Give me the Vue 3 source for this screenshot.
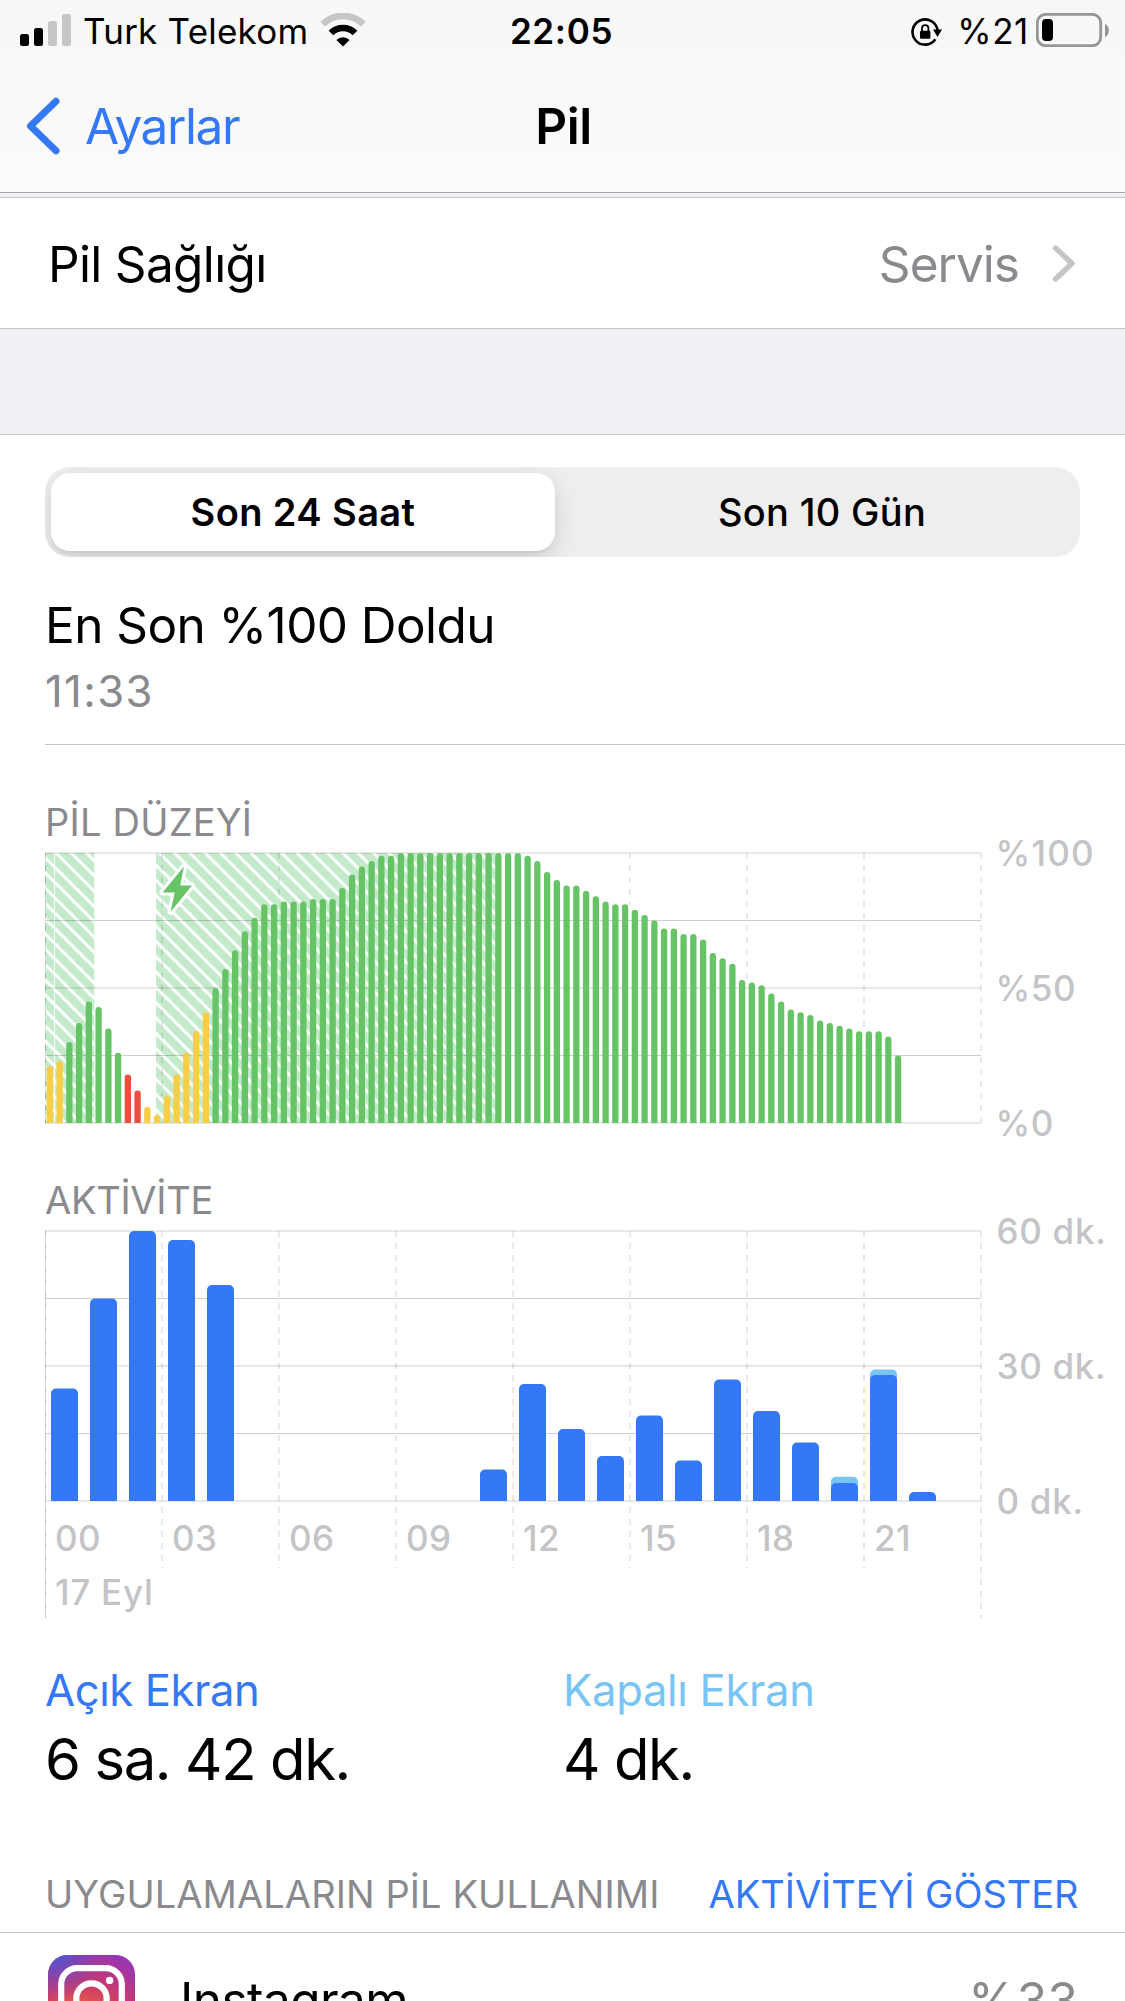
<script setup>
// Battery level every 15 minutes, in percent
const levels = [
  21, 23, 30, 37, 45, 43, 35, 26, 18, 12, 6, 3, 10, 18, 26, 34, 41, 50, 57, 64,
  71, 76, 81, 81, 82, 82, 82, 83, 83, 83, 87, 92, 95, 97, 99, 99, 100, 100, 100, 100,
  100, 100, 100, 100, 100, 100, 100, 100, 100, 99, 97, 93, 90, 88, 88, 86, 84, 82, 81, 81,
  79, 77, 75, 72, 72, 70, 70, 68, 63, 61, 59, 53, 52, 51, 48, 45, 42, 41, 40, 38,
  37, 36, 35, 34, 34, 34, 32, 25
]
const GREEN = '#67c466'
const YELLOW = '#f7ce46'
const RED = '#eb4e3d'
const colorOf = (i) => (i === 8 || i === 9 ? RED : i < 2 || (i > 9 && i < 17) ? YELLOW : GREEN)

const topRounded = (x, y, w, r, base) =>
  `M${x} ${base}V${y + r}a${r} ${r} 0 0 1 ${r} ${-r}h${w - 2 * r}a${r} ${r} 0 0 1 ${r} ${r}V${base}z`

const levelBars = levels.map((v, i) => ({
  d: topRounded(i * 9.75 + 1.7, 270 - v * 2.7, 6.3, 3.15, 270),
  fill: colorOf(i)
}))

// Dashed hour marks stop where the bars begin
const levelMarks = [1, 2, 3, 4, 5, 6, 7, 8].map((k) => {
  const i = k * 12
  const v = Math.max(levels[i - 1] ?? 0, levels[i] ?? 0)
  return { x: k * 117, y: 270 - v * 2.7 }
})

// Minutes of activity per hour: [hour, screen on, total]
const activity = [
  [0, 25, 25], [1, 45, 45], [2, 60, 60], [3, 58, 58], [4, 48, 48], [11, 7, 7],
  [12, 26, 26], [13, 16, 16], [14, 10, 10], [15, 19, 19], [16, 9, 9], [17, 27, 27],
  [18, 20, 20], [19, 13, 13], [20, 4, 5.4], [21, 28, 29.2], [22, 2, 2]
]
const activityBars = activity.map(([h, on, total]) => ({
  on: topRounded(h * 39 + 6, 270 - on * 4.5, 27, 5, 270),
  off: total > on ? topRounded(h * 39 + 6, 270 - total * 4.5, 27, 5, 270) : null
}))
const hours = ['00', '03', '06', '09', '12', '15', '18', '21']
</script>

<template>
  <div class="screen">
    <header class="header">
      <div class="status">
        <div class="status-left">
          <svg class="signal" width="52" height="32" viewBox="0 0 52 32">
            <rect x="0" y="20" width="9" height="12" rx="2.5" fill="#000" />
            <rect x="14" y="14" width="9" height="18" rx="2.5" fill="#000" />
            <rect x="28" y="7" width="9" height="25" rx="2.5" fill="#c6c6c7" />
            <rect x="42" y="0" width="9" height="32" rx="2.5" fill="#c6c6c7" />
          </svg>
          <span class="carrier">Turk Telekom</span>
          <svg class="wifi" width="46" height="34" viewBox="0 0 46 34">
            <path d="M2.8 11.2a28.6 28.6 0 0 1 40.4 0" fill="none" stroke="#c6c6c7" stroke-width="6.6" />
            <path d="M11 20a17 17 0 0 1 24 0" fill="none" stroke="#000" stroke-width="6.6" />
            <path d="M23 33.5l-6.6-6.6a9.4 9.4 0 0 1 13.2 0z" fill="#000" />
          </svg>
        </div>
        <div class="clock">22:05</div>
        <div class="status-right">
          <svg class="lock" width="34" height="30" viewBox="0 0 34 30">
            <path d="M27.6 13.5A12.6 12.6 0 1 0 25.4 22.3" fill="none" stroke="#000" stroke-width="2.6" />
            <path d="M23 12.4h9L27.5 20z" fill="#000" />
            <rect x="10" y="13.8" width="10.4" height="8" rx="1.2" fill="#000" />
            <path d="M12 14.5v-3.2a3.2 3.2 0 0 1 6.4 0v3.2" fill="none" stroke="#000" stroke-width="1.8" />
          </svg>
          <span class="percent">%21</span>
          <svg class="battery" width="74" height="34" viewBox="0 0 74 34">
            <rect x="1.3" y="1.3" width="63.4" height="31.4" rx="8.5" fill="none" stroke="#969697" stroke-width="2.8" />
            <rect x="6" y="6" width="11" height="22" rx="4" fill="#000" />
            <path d="M69 11c5.2 2.2 5.2 10.8 0 13z" fill="#969697" />
          </svg>
        </div>
      </div>
      <nav class="nav">
        <div class="back">
          <svg width="36" height="58" viewBox="0 0 36 58">
            <path d="M31 4.200L5.500 29L31 53.800" fill="none" stroke="#3478f6" stroke-width="7" stroke-linecap="round" stroke-linejoin="round" />
          </svg>
          <span>Ayarlar</span>
        </div>
        <div class="title">Pil</div>
      </nav>
    </header>

    <section class="health">
      <span class="health-name">Pil Sağlığı</span>
      <span class="health-value">Servis</span>
      <svg width="23" height="38" viewBox="0 0 23 38">
        <path d="M3.500 3L20 18.500L3.500 34" fill="none" stroke="#c4c4c6" stroke-width="5.400" stroke-linecap="round" stroke-linejoin="round" />
      </svg>
    </section>
    <div class="gap"></div>

    <main class="usage">
      <div class="segmented">
        <div class="tab tab-on">Son 24 Saat</div>
        <div class="tab tab-off">Son 10 Gün</div>
      </div>

      <div class="charge">
        <div class="charge-title">En Son %100 Doldu</div>
        <div class="charge-time">11:33</div>
      </div>

      <h2 class="caption level-caption">PİL DÜZEYİ</h2>
      <div class="chart">
        <svg width="937" height="272" viewBox="0 -1 937 272">
          <defs>
            <pattern id="hatch-a" width="15.3" height="15.3" patternUnits="userSpaceOnUse" patternTransform="translate(11 0)">
              <rect width="15.3" height="15.3" fill="#c3eaca" />
              <path d="M-15.3 -15.3L30.6 30.6M0 -15.3L30.6 15.3M-15.3 0L15.3 30.6" stroke="#fff" stroke-width="3" />
            </pattern>
            <pattern id="hatch-b" width="15.3" height="15.3" patternUnits="userSpaceOnUse" patternTransform="translate(7.2 0)">
              <rect width="15.3" height="15.3" fill="#c3eaca" />
              <path d="M-15.3 -15.3L30.6 30.6M0 -15.3L30.6 15.3M-15.3 0L15.3 30.6" stroke="#fff" stroke-width="3" />
            </pattern>
          </defs>
          <rect x="0" y="0" width="49.3" height="270" fill="url(#hatch-a)" />
          <path d="M9.5 0V270" stroke="#fff" />
          <rect x="111" y="0" width="341" height="270" fill="url(#hatch-b)" />
          <path d="M0 0H936M0 135H936M0 270H936" stroke="#000" stroke-opacity=".09" stroke-width="2" />
          <path d="M0 67.5H936M0 202.5H936" stroke="#000" stroke-opacity=".19" />
          <path d="M.5 0V270" stroke="#000" stroke-opacity=".2" stroke-dasharray="6" />
          <path
            v-for="m in levelMarks" :key="m.x" :d="`M${m.x} 0V${m.y}`"
            stroke="#000" stroke-opacity=".09" stroke-width="2" stroke-dasharray="6"
          />
          <path v-for="(b, i) in levelBars" :key="i" :d="b.d" :fill="b.fill" />
          <path
            d="M139 13.5L117.5 39.5h12.2L125.5 59L147 32.5h-11.8z"
            fill="#67c466" stroke="#fff" stroke-width="6" stroke-linejoin="round" paint-order="stroke"
          />
        </svg>
        <div class="scale scale-percent">
          <span class="p100">%100</span><span>%50</span><span>%0</span>
        </div>
      </div>

      <h2 class="caption activity-caption">AKTİVİTE</h2>
      <div class="chart activity-chart">
        <svg width="937" height="389" viewBox="0 -1 937 389">
          <path d="M0 0H936M0 135H936M0 270H936" stroke="#000" stroke-opacity=".09" stroke-width="2" />
          <path d="M0 67.5H936M0 202.5H936" stroke="#000" stroke-opacity=".19" />
          <path d="M.5 0V387" stroke="#000" stroke-opacity=".17" />
          <path d="M.5 0V387" stroke="#000" stroke-opacity=".09" stroke-dasharray="6" />
          <path
            v-for="k in 7" :key="k" :d="`M${k * 117} 0V337.5`"
            stroke="#000" stroke-opacity=".09" stroke-width="2" stroke-dasharray="6"
          />
          <path d="M936 0V387" stroke="#000" stroke-opacity=".09" stroke-width="2" stroke-dasharray="6" />
          <template v-for="(b, i) in activityBars" :key="i">
            <path v-if="b.off" :d="b.off" fill="#78c5f5" />
            <path :d="b.on" fill="#3478f6" />
          </template>
          <text v-for="(h, i) in hours" :key="h" class="tick" :x="i * 117 + 10" y="319.5">{{ h }}</text>
          <text class="tick date" x="10" y="374">17 Eyl</text>
        </svg>
        <div class="scale scale-minutes">
          <span>60 dk.</span><span>30 dk.</span><span>0 dk.</span>
        </div>
      </div>

      <div class="totals">
        <div class="total">
          <div class="total-name on">Açık Ekran</div>
          <div class="total-value">6 sa. 42 dk.</div>
        </div>
        <div class="total">
          <div class="total-name off">Kapalı Ekran</div>
          <div class="total-value">4 dk.</div>
        </div>
      </div>

      <div class="apps-head">
        <h2 class="caption">UYGULAMALARIN PİL KULLANIMI</h2>
        <span class="show">AKTİVİTEYİ GÖSTER</span>
      </div>
      <div class="app">
        <svg class="app-icon" width="87" height="87" viewBox="0 0 87 87">
          <defs>
            <radialGradient id="ig-warm" cx=".36" cy="1" r="1.05">
              <stop offset="0" stop-color="#fed576" />
              <stop offset=".26" stop-color="#f47133" />
              <stop offset=".58" stop-color="#d04262" />
              <stop offset=".76" stop-color="#bc3880" />
              <stop offset="1" stop-color="#9b36b0" />
            </radialGradient>
            <radialGradient id="ig-cool" cx=".1" cy="-.02" r=".55">
              <stop offset="0" stop-color="#4a5bd3" />
              <stop offset="1" stop-color="#6a3fc0" stop-opacity="0" />
            </radialGradient>
          </defs>
          <rect width="87" height="87" rx="19.5" fill="url(#ig-warm)" />
          <rect width="87" height="87" rx="19.5" fill="url(#ig-cool)" />
          <g fill="none" stroke="#fff" stroke-width="6.2">
            <rect x="13.2" y="13.2" width="60.6" height="60.6" rx="16" />
            <circle cx="43.5" cy="43.5" r="15.2" />
          </g>
          <circle cx="61.6" cy="25.4" r="3.7" fill="#fff" />
        </svg>
        <span class="app-name">Instagram</span>
        <span class="app-share">%33</span>
      </div>
    </main>
  </div>
</template>

<style>
body { margin: 0; }
</style>

<style scoped>
.screen {
  width: 1125px;
  height: 2001px;
  overflow: hidden;
  background: #fff;
  color: #000;
  font-family: Inter, "Noto Sans", sans-serif;
  font-size: 49.5px;
  white-space: nowrap;
}
.header {
  box-sizing: border-box;
  height: 193px;
  background: linear-gradient(#f7f7f8, #fbfbfd);
  border-bottom: 1px solid #a7a7aa;
}
.status {
  display: grid;
  grid-template-columns: 1fr auto 1fr;
  height: 63px;
  font-size: 35px;
  line-height: 63px;
}
.status-left { display: flex; padding-left: 20px; }
.signal { margin-top: 14px; }
.carrier { margin-left: 11px; letter-spacing: .22px; }
.wifi { margin: 13px 0 0 12px; }
.clock { padding-right: 2px; font-weight: 600; letter-spacing: .66px; }
.status-right { display: flex; justify-content: flex-end; padding-right: 15px; }
.lock { margin-top: 17px; }
.percent { margin-left: 13px; letter-spacing: .64px; }
.battery { margin: 13px 0 0 7px; }
.nav {
  display: grid;
  grid-template-columns: 1fr auto 1fr;
  height: 126px;
  line-height: 126px;
}
.back { display: flex; align-items: center; padding-left: 25px; color: #3478f6; letter-spacing: -1.39px; }
.back span { margin-left: 24px; }
.title { padding-left: 2px; font-weight: 600; letter-spacing: -.44px; }

.health {
  box-sizing: border-box;
  display: flex;
  align-items: center;
  height: 136px;
  padding: 2px 50px 0 48px;
  border-top: 4px solid #f0f0f5;
  border-bottom: 1px solid #c6c6c9;
  background: linear-gradient(#c6c6c9, #c6c6c9) top / 100% 1px no-repeat;
}
.health-name { letter-spacing: -.66px; }
.health-value { margin: 0 33px 0 auto; color: #8a8a8e; letter-spacing: -.97px; }
.gap { height: 105px; background: #f0f0f5; border-bottom: 1px solid #c6c6c9; }

.usage { padding-top: 32px; }
.segmented {
  box-sizing: border-box;
  display: flex;
  width: 1035px;
  height: 90px;
  margin-left: 45px;
  padding: 6px 0 6px 6px;
  overflow: hidden;
  border-radius: 25px;
  background: #eee;
  font-size: 38px;
  line-height: 78px;
  text-align: center;
}
.tab-on {
  width: 504px;
  border-radius: 19px;
  background: #fff;
  box-shadow: 0 8px 22px rgba(0, 0, 0, .14), 0 3px 3px rgba(0, 0, 0, .04);
  font-weight: 600;
  letter-spacing: .4px;
}
.tab-off { flex: 1; padding-left: 9px; font-weight: 500; letter-spacing: .31px; }

.charge { height: 149px; margin-left: 45px; padding-top: 38px; border-bottom: 1px solid #c6c6c8; }
.charge-title { line-height: 60px; letter-spacing: -.57px; }
.charge-time { margin-top: 11px; font-size: 43.6px; line-height: 52px; letter-spacing: 1.39px; color: #8a8a8e; }

.caption {
  margin: 0 0 0 45px;
  font-size: 38px;
  font-weight: 400;
  line-height: 44px;
  letter-spacing: .08px;
  color: #8a8a8e;
}
.level-caption { padding-top: 55px; letter-spacing: .22px; }
.activity-caption { padding-top: 54px; letter-spacing: -.28px; }
.chart { display: flex; margin: 8px 0 0 45px; }
.chart svg { flex: none; }
.activity-chart { height: 389px; }
.scale {
  display: flex;
  flex-direction: column;
  justify-content: space-between;
  height: 306px;
  margin: -17px 0;
  font-size: 35px;
  font-weight: 500;
  line-height: 36px;
  color: #c4c4c6;
}
.scale-percent { margin-left: 13.5px; letter-spacing: .5px; }
.p100 { letter-spacing: 1.2px; }
.scale-minutes { margin-left: 14.5px; letter-spacing: .7px; }
.tick { font-size: 35px; font-weight: 500; letter-spacing: .4px; fill: #c4c4c6; }
.date { letter-spacing: .75px; }

.totals { display: grid; grid-template-columns: 518px 1fr; margin: 46px 0 0 45px; }
.total-name { font-size: 43.6px; line-height: 52px; }
.total-value { margin-top: 7px; font-size: 58px; line-height: 70px; letter-spacing: -1.4px; }
.on { color: #3478f6; letter-spacing: -.42px; }
.off { color: #78c5f5; letter-spacing: -.32px; }

.apps-head {
  display: flex;
  height: 60px;
  margin-top: 78px;
  border-bottom: 1px solid #c6c6c8;
}
.show { margin: 0 46.5px 0 auto; font-size: 38px; line-height: 44px; color: #3478f6; letter-spacing: -.04px; }
.app { display: flex; align-items: flex-start; padding: 22px 47px 0 48px; line-height: 90px; }
.app-name { margin-left: 45px; letter-spacing: -.55px; }
.app-share { margin-left: auto; color: #8a8a8e; }
</style>
